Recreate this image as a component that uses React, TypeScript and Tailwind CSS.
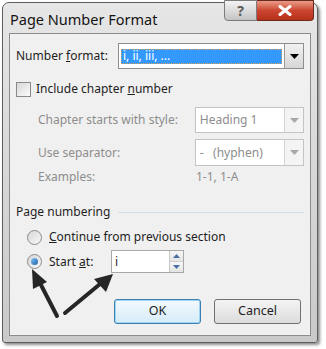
import React from "react"

function Combo({ text, disabled, selected, width }: { text: string; disabled?: boolean; selected?: boolean; width: string }) {
  return (
    <div className={`flex h-full ${width} border ${disabled ? "border-[#c4c4c4]" : "border-[#8e8e8e]"} bg-white`}>
      <div className="flex flex-1 items-center px-[2px]">
        {selected ? (
          <div className="flex h-[15px] flex-1 items-center border border-dotted border-[#d7a15c] bg-[#3399ff] pl-[1px] text-white">
            {text}
          </div>
        ) : (
          <span className={`whitespace-pre ${disabled ? "pl-[2px] text-[#8d8d8d]" : "pl-[2px]"}`}>{text}</span>
        )}
      </div>
      <div
        className={`flex w-[19px] items-center justify-center border-l ${
          disabled ? "border-[#d4d4d4] bg-[#f4f4f4]" : "border-[#9a9a9a] bg-gradient-to-b from-[#f2f2f2] to-[#d6d6d6]"
        }`}
      >
        <svg width="9" height="5" viewBox="0 0 9 5">
          <path d="M0 0h9L4.5 5z" fill={disabled ? "#a8a8a8" : "#000"} />
        </svg>
      </div>
    </div>
  )
}

function Radio({ checked }: { checked?: boolean }) {
  return (
    <div className="flex h-[15px] w-[15px] items-center justify-center rounded-full border border-[#8a8a8a] bg-gradient-to-br from-[#d6d6d6] to-[#fafafa]">
      {checked && <div className="h-[7px] w-[7px] rounded-full bg-gradient-to-br from-[#7fc4f5] to-[#1d5fa8]" />}
    </div>
  )
}

export default function App() {
  return (
    <div
      className="relative h-[349px] w-[326px] overflow-hidden bg-white pl-[2px] pt-[2px] text-[12px] text-[#1e1e1e]"
      style={{ fontFamily: "'Noto Sans', 'Open Sans', sans-serif" }}
    >
      <div className="h-[341px] w-[316px] rounded-t-[7px] rounded-b-[3px] border border-[#5e5e5e] bg-gradient-to-b from-[#e6e6e6] to-[#c9c9c9] shadow-[2px_2px_3px_rgba(0,0,0,0.45)]">
        {/* title bar */}
        <div className="flex h-[30px] items-start justify-between">
          <div className="pl-[7px] pt-[6px] text-[14.5px] text-[#141414]">Page Number Format</div>
          <div className="-mt-[3px] mr-[3px] flex h-[21px]">
            <div className="flex w-[33px] items-center justify-center rounded-bl-[4px] border border-[#7b7b7b] bg-gradient-to-b from-[#f3f3f3] to-[#c4c4c4] text-[14px] font-bold text-[#5a5a5a]">
              ?
            </div>
            <div className="flex w-[57px] items-center justify-center rounded-br-[4px] border border-l-0 border-[#6a2a20] bg-gradient-to-b from-[#e99a88] via-[#cc4530] to-[#b7301a]">
              <svg width="14" height="11" viewBox="0 0 14 11">
                <path d="M2 1.5l10 8M12 1.5l-10 8" stroke="#fff" strokeWidth="3" strokeLinecap="round" />
              </svg>
            </div>
          </div>
        </div>

        {/* client area */}
        <div className="mx-[6px] h-[303px] border border-[#8c8c8c] bg-[#f0f0f0] px-[6px] pt-[9px]">
          <div className="flex h-[26px] items-center">
            <span className="w-[102px]">
              Number <span className="underline">f</span>ormat:
            </span>
            <Combo text="i, ii, iii, ..." selected width="w-[186px]" />
          </div>

          <div className="mt-[12px] flex h-[16px] items-center gap-[5px]">
            <div className="h-[15px] w-[15px] border border-[#8a8a8a] bg-gradient-to-br from-[#d8d8d8] to-[#fbfbfb]" />
            <span>
              Include chapter <span className="underline">n</span>umber
            </span>
          </div>

          <div className="mt-[10px] flex h-[26px] items-center pl-[22px] text-[#8d8d8d]">
            <span className="w-[158px]">Chapter starts with style:</span>
            <Combo text="Heading 1" disabled width="w-[110px]" />
          </div>

          <div className="mt-[6px] flex h-[27px] items-center pl-[22px] text-[#8d8d8d]">
            <span className="w-[158px]">Use separator:</span>
            <Combo text="-   (hyphen)" disabled width="w-[110px]" />
          </div>

          <div className="mt-[3px] flex h-[16px] items-center pl-[22px] text-[#8d8d8d]">
            <span className="w-[158px]">Examples:</span>
            <span>1-1, 1-A</span>
          </div>

          <div className="mt-[19px] flex h-[16px] items-center gap-[8px]">
            <span>Page numbering</span>
            <div className="h-px flex-1 bg-[#d5dfe5]" />
          </div>

          <div className="mt-[9px] flex h-[16px] items-center gap-[7px] pl-[11px]">
            <Radio />
            <span>
              <span className="underline">C</span>ontinue from previous section
            </span>
          </div>

          <div className="mt-[5px] flex h-[23px] items-center pl-[11px]">
            <Radio checked />
            <span className="ml-[7px] w-[62px]">
              Start <span className="underline">a</span>t:
            </span>
            <div className="flex h-full w-[73px] border border-[#a8a8a8] bg-white">
              <div className="flex flex-1 items-center pl-[3px]">i</div>
              <div className="flex w-[14px] flex-col border-l border-[#c8c8c8]">
                <div className="flex flex-1 items-center justify-center bg-gradient-to-b from-[#f7f7f7] to-[#e4e4e4]">
                  <svg width="7" height="4" viewBox="0 0 7 4">
                    <path d="M0 4L3.5 0 7 4z" fill="#4a6ea5" />
                  </svg>
                </div>
                <div className="flex flex-1 items-center justify-center border-t border-[#d0d0d0] bg-gradient-to-b from-[#f7f7f7] to-[#e4e4e4]">
                  <svg width="7" height="4" viewBox="0 0 7 4">
                    <path d="M0 0h7L3.5 4z" fill="#4a6ea5" />
                  </svg>
                </div>
              </div>
            </div>
          </div>

          <div className="mt-[26px] flex justify-end gap-[13px] pr-[3px]">
            <button className="h-[25px] w-[87px] rounded-[3px] border border-[#3c7fb1] bg-gradient-to-b from-[#f2f9fd] to-[#d6ecf8] shadow-[inset_0_0_0_1px_#9fd5f2] text-[12.5px]">
              OK
            </button>
            <button className="h-[25px] w-[87px] rounded-[3px] border border-[#707070] bg-gradient-to-b from-[#f4f4f4] to-[#dcdcdc] text-[12.5px]">
              Cancel
            </button>
          </div>
        </div>
      </div>

      {/* annotation arrows */}
      <svg className="absolute left-0 top-0" width="326" height="349" viewBox="0 0 326 349">
        <g stroke="#262626" strokeWidth="4" strokeLinecap="round">
          <line x1="57" y1="316" x2="40" y2="283" />
          <line x1="65" y1="313" x2="100" y2="284" />
        </g>
        <g fill="#262626">
          <path d="M32 269L47 282 33 289z" />
          <path d="M113 274L106 292 94 279z" />
        </g>
      </svg>
    </div>
  )
}
